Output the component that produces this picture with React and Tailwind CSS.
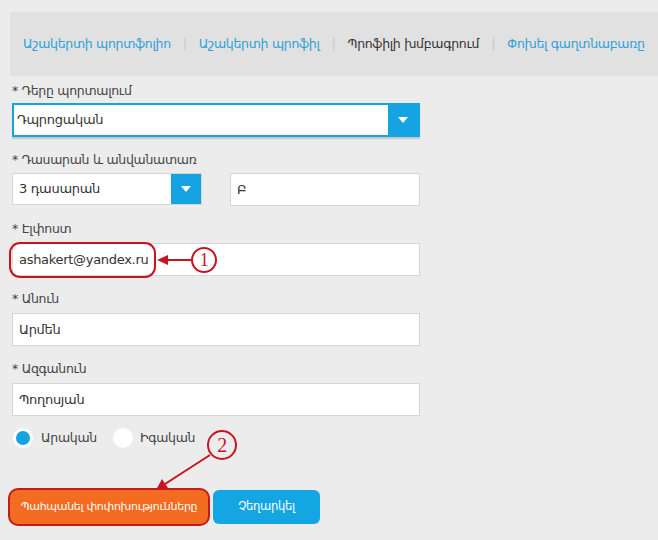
const font = { fontFamily: '"DejaVu Sans", "Noto Sans", sans-serif' };

function Arrow() {
  return (
    <svg width="12" height="10" viewBox="0 0 12 10">
      <path d="M1 2 L11 2 L6 8 Z" fill="#fff" />
    </svg>
  );
}

function Label({ children, className = "mb-[8px]" }) {
  return <div className={`text-[12.5px] text-[#444] leading-[13px] ${className}`}>* {children}</div>;
}

function Input({ value, className = "" }) {
  return (
    <div className={`h-[33px] bg-white border border-[#d6d6d6] flex items-center px-[6px] text-[13px] text-[#333] ${className}`}>
      {value}
    </div>
  );
}

export default function App() {
  return (
    <div className="w-[658px] h-[540px] bg-[#ececec] relative overflow-hidden tracking-[-0.3px]" style={font}>
      <div className="pt-[12px] pl-[10px]">
        <nav className="h-[64px] bg-[#e1e1e1] flex items-center pl-[13px] text-[12.5px] whitespace-nowrap">
          <span className="text-[#2e9fd8]">Աշակերտի պորտֆոլիո</span>
          <span className="text-[#c8c8c8] mx-[12px]">|</span>
          <span className="text-[#2e9fd8]">Աշակերտի պրոֆիլ</span>
          <span className="text-[#c8c8c8] mx-[12px]">|</span>
          <span className="text-[#333]">Պրոֆիլի խմբագրում</span>
          <span className="text-[#c8c8c8] mx-[12px]">|</span>
          <span className="text-[#2e9fd8]">Փոխել գաղտնաբառը</span>
        </nav>
      </div>

      <div className="pl-[12px] w-[420px] pt-[8px]">
        <Label className="mb-[6px]">Դերը պորտալում</Label>
        <div className="h-[34px] bg-white border-2 border-[#16a3e2] flex shadow-[0_2px_1px_#c9c9c9]">
          <div className="flex-1 flex items-center px-[3px] text-[13px] text-[#333]">Դպրոցական</div>
          <div className="w-[30px] bg-[#16a3e2] flex items-center justify-center"><Arrow /></div>
        </div>

        <div className="mt-[16px]">
          <Label className="mb-[7px]">Դասարան և անվանատառ</Label>
          <div className="flex gap-[28px]">
            <div className="w-[190px] h-[32px] bg-white border border-[#d6d6d6] flex">
              <div className="flex-1 flex items-center px-[6px] text-[13px] text-[#333]">3 դասարան</div>
              <div className="w-[30px] bg-[#16a3e2] flex items-center justify-center"><Arrow /></div>
            </div>
            <Input value="Բ" className="flex-1 h-[32px]" />
          </div>
        </div>

        <div className="mt-[16px]">
          <Label>Էլփոստ</Label>
          <Input value="ashakert@yandex.ru" />
        </div>
        <div className="mt-[16px]">
          <Label>Անուն</Label>
          <Input value="Արմեն" />
        </div>
        <div className="mt-[16px]">
          <Label>Ազգանուն</Label>
          <Input value="Պողոսյան" />
        </div>

        <div className="flex items-center mt-[12px] text-[12.5px] text-[#444]">
          <span className="ml-[1px] w-[20px] h-[20px] rounded-full bg-[#16a3e2] border-[3px] border-white"></span>
          <span className="ml-[8px]">Արական</span>
          <span className="ml-[16px] w-[20px] h-[20px] rounded-full bg-white"></span>
          <span className="ml-[7px]">Իգական</span>
        </div>

        <div className="flex mt-[42px] gap-[5px] -ml-[2px]">
          <button className="w-[198px] h-[34px] bg-[#f36c21] text-white text-[11px] rounded-[8px] ring-2 ring-[#c41a1a]">
            Պահպանել փոփոխությունները
          </button>
          <button className="w-[107px] h-[34px] bg-[#14a5e3] text-white text-[11.5px] rounded-[6px]">
            Չեղարկել
          </button>
        </div>
      </div>

      <svg className="absolute left-0 top-0 pointer-events-none" width="658" height="540">
        <rect x="10" y="243" width="145" height="34" rx="10" fill="none" stroke="#c8141e" strokeWidth="2" />
        <line x1="166" y1="260" x2="192" y2="260" stroke="#c8141e" strokeWidth="2" />
        <path d="M157 260 L168 255 L168 265 Z" fill="#c8141e" />
        <circle cx="204" cy="260" r="12" fill="none" stroke="#c8141e" strokeWidth="2" />
        <text x="204" y="266" textAnchor="middle" fontFamily="Liberation Serif, serif" fontSize="18" fill="#c8141e">1</text>
        <circle cx="222" cy="445" r="14" fill="none" stroke="#c8141e" strokeWidth="2" />
        <text x="222" y="452" textAnchor="middle" fontFamily="Liberation Serif, serif" fontSize="20" fill="#c8141e">2</text>
        <line x1="210" y1="455" x2="165" y2="484" stroke="#c8141e" strokeWidth="2" />
        <path d="M156 490 L162 479 L168 488 Z" fill="#c8141e" />
      </svg>
    </div>
  );
}
